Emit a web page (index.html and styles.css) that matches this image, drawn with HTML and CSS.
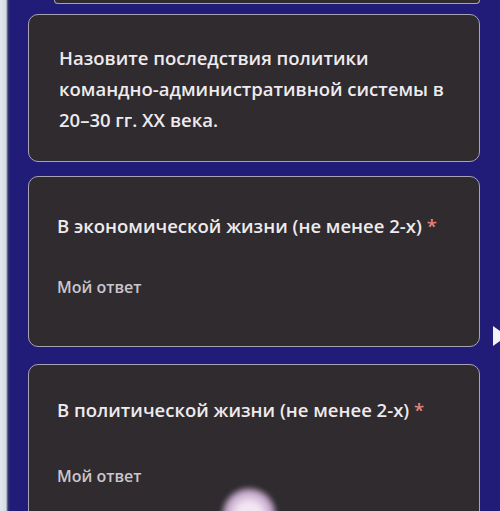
FILE: index.html
```html
<!DOCTYPE html>
<html lang="ru">
<head>
  <meta charset="UTF-8" />
  <title>Форма</title>
  <link rel="stylesheet" href="styles.css">
</head>
<body>
  <div class="edge"></div>
  <main class="form">
    <div class="card card-prev"></div>
    <section class="card card-head">
      <p class="desc">Назовите последствия политики командно-административной системы в 20–30 гг. XX века.</p>
    </section>
    <section class="card question">
      <div class="q-title">В экономической жизни (не менее 2-х) <span class="req">*</span></div>
      <div class="answer">Мой ответ</div>
    </section>
    <section class="card question question-last">
      <div class="q-title">В политической жизни (не менее 2-х) <span class="req">*</span></div>
      <div class="answer">Мой ответ</div>
    </section>
  </main>
  <div class="arrow"></div>
  <div class="glare"></div>
</body>
</html>
```

FILE: styles.css
```css
body {
  margin: 0;
  height: 511px;
  overflow: hidden;
  display: flex;
  background-color: #201c77;
  font-family: "Open Sans", "Liberation Sans", sans-serif;
  color: #eeeaee;
  position: relative;
}
.edge {
  width: 10px;
  flex-shrink: 0;
  background: linear-gradient(to right, #e2e6ee 0, #d6dbe6 6px, #3a3a70 8px, #201c77 10px);
}
.form {
  display: flex;
  flex-direction: column;
  width: 452px;
  margin-left: 18px;
}
.card {
  background-color: #2f2b2f;
  border: 1px solid #a8a3b3;
  border-radius: 10px;
}
.card-prev {
  height: 3px;
  flex-shrink: 0;
  border-top: none;
  border-radius: 0 0 10px 10px;
  margin-left: 26px;
}
.card-head {
  margin-top: 10px;
  padding: 27px 30px 26px;
}
.desc {
  margin: 0;
  font-size: 18.5px;
  font-weight: 600;
  line-height: 31px;
}
.question {
  margin-top: 14px;
  padding: 37px 28px 48px;
}
.question-last {
  margin-top: 17px;
  padding-top: 33px;
}
.q-title {
  font-size: 18.5px;
  font-weight: 600;
  line-height: 24px;
}
.req {
  color: #e8837a;
}
.answer {
  margin-top: 38px;
  font-size: 16px;
  font-weight: 600;
  line-height: 22px;
  color: #cbc6cc;
}
.question-last .answer {
  margin-top: 43px;
}
.arrow {
  position: absolute;
  left: 493px;
  top: 326px;
  width: 0;
  height: 0;
  border-top: 10px solid transparent;
  border-bottom: 10px solid transparent;
  border-left: 14px solid #f2f2f6;
}
.glare {
  position: absolute;
  left: 220px;
  top: 486px;
  width: 58px;
  height: 58px;
  border-radius: 50%;
  background: radial-gradient(circle, #f3e6f3 28%, #c6a9cc 55%, rgba(90, 70, 100, 0) 72%);
  filter: blur(2px);
}
```
